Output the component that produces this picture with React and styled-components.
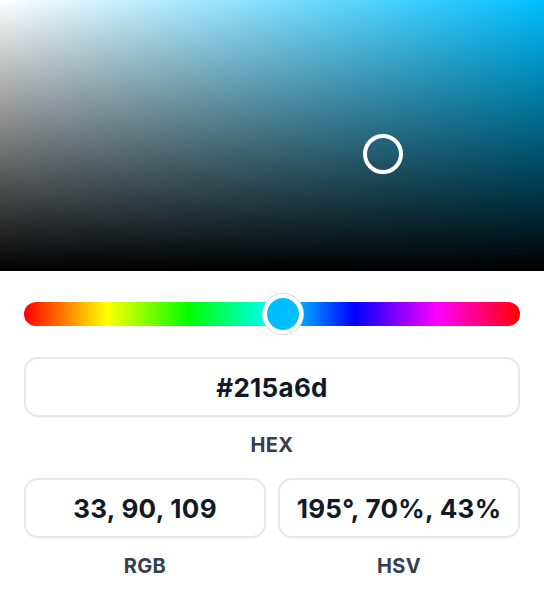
import React from "react";
import styled, { createGlobalStyle } from "styled-components";

const Global = createGlobalStyle`
  html, body { margin: 0; padding: 0; background: #ffffff; }
  body { font-family: Inter, "Open Sans", "DejaVu Sans", sans-serif; }
  * { box-sizing: border-box; }
`;

const Picker = styled.div`
  width: 544px;
  background: #ffffff;
  display: flex;
  flex-direction: column;
`;

const Saturation = styled.div`
  position: relative;
  width: 544px;
  height: 271px;
  background:
    linear-gradient(to bottom, rgba(0, 0, 0, 0) 0%, #000 100%),
    linear-gradient(to right, #fff 0%, rgba(255, 255, 255, 0) 100%),
    ${(p) => p.$hue};
`;

const SatCursor = styled.div`
  position: absolute;
  width: 40px;
  height: 40px;
  margin: -20px 0 0 -20px;
  border: 4px solid #ffffff;
  border-radius: 50%;
`;

const Controls = styled.div`
  display: flex;
  flex-direction: column;
  padding: 31px 24px 0;
`;

const HueTrack = styled.div`
  position: relative;
  height: 24px;
  border-radius: 12px;
  background: linear-gradient(
    to right,
    #ff0000 0%,
    #ffff00 16.66%,
    #00ff00 33.33%,
    #00ffff 50%,
    #0000ff 66.66%,
    #ff00ff 83.33%,
    #ff0000 100%
  );
`;

const HueThumb = styled.div`
  position: absolute;
  top: 50%;
  width: 40px;
  height: 40px;
  margin: -20px 0 0 -20px;
  border-radius: 50%;
  background: ${(p) => p.$color};
  border: 4px solid #ffffff;
  box-shadow: 0 0 0 1px #d4d7dc;
`;

const Fields = styled.div`
  display: grid;
  grid-template-columns: ${(p) => (p.$cols === 2 ? "1fr 1fr" : "1fr")};
  column-gap: 12px;
  margin-top: ${(p) => p.$top}px;
`;

const Field = styled.div`
  display: flex;
  flex-direction: column;
  align-items: center;
`;

const ValueBox = styled.div`
  width: 100%;
  height: 60px;
  border: 2px solid #e6e7eb;
  border-radius: 14px;
  display: flex;
  align-items: center;
  justify-content: center;
  font-size: 26px;
  font-weight: 700;
  color: #121826;
  letter-spacing: 0.3px;
  box-shadow: 0 1px 2px rgba(0, 0, 0, 0.04);
`;

const Label = styled.div`
  margin-top: 16px;
  height: 24px;
  line-height: 24px;
  font-size: 20px;
  font-weight: 700;
  color: #344050;
  letter-spacing: 0.3px;
`;

export default function App() {
  const hueColor = "#00bfff";
  return (
    <Picker>
      <Global />
      <Saturation $hue="hsl(195, 100%, 50%)">
        <SatCursor style={{ left: "70.4%", top: "56.8%" }} />
      </Saturation>
      <Controls>
        <HueTrack>
          <HueThumb $color={hueColor} style={{ left: "52.2%" }} />
        </HueTrack>
        <Fields $top={31}>
          <Field>
            <ValueBox>#215a6d</ValueBox>
            <Label>HEX</Label>
          </Field>
        </Fields>
        <Fields $cols={2} $top={21}>
          <Field>
            <ValueBox>33, 90, 109</ValueBox>
            <Label>RGB</Label>
          </Field>
          <Field>
            <ValueBox>195°, 70%, 43%</ValueBox>
            <Label>HSV</Label>
          </Field>
        </Fields>
      </Controls>
    </Picker>
  );
}
